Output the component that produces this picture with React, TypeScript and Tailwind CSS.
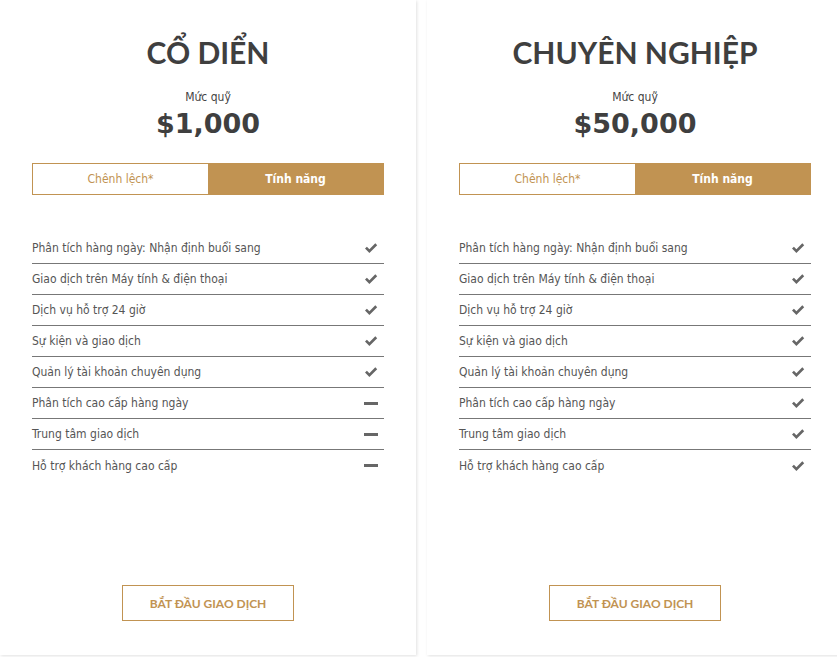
const features = [
  'Phân tích hàng ngày: Nhận định buổi sang',
  'Giao dịch trên Máy tính & điện thoại',
  'Dịch vụ hỗ trợ 24 giờ',
  'Sự kiện và giao dịch',
  'Quản lý tài khoản chuyên dụng',
  'Phân tích cao cấp hàng ngày',
  'Trung tâm giao dịch',
  'Hỗ trợ khách hàng cao cấp',
]

const plans = [
  { name: 'CỔ DIỂN', amount: '$1,000', included: 5 },
  { name: 'CHUYÊN NGHIỆP', amount: '$50,000', included: 8 },
]

const CheckIcon = () => (
  <svg width="14" height="12" viewBox="0 0 14 12" className="text-[#666]">
    <path d="M1 6.6 L2.9 4.7 L5.4 7.2 L11.3 1.3 L13.2 3.2 L5.4 11 Z" fill="currentColor" />
  </svg>
)

const MinusIcon = () => <div className="h-[3px] w-[14px] bg-[#666]" />

const PlanCard = ({ name, amount, included }: { name: string; amount: string; included: number }) => (
  <div className="flex h-[655px] w-[416px] shrink-0 flex-col bg-white px-8 pb-[34px] pt-[34px] shadow-[1px_1px_3px_rgba(0,0,0,0.12)]">
    <h2 className="text-center font-['Lato'] text-[30px] font-bold leading-[36px] text-[#3f3f3f]">{name}</h2>
    <p className="mt-[19px] text-center text-[12px] leading-4 text-[#444]">Mức quỹ</p>
    <p className="mt-[3px] text-center font-['DejaVu_Sans',sans-serif] text-[27px] font-bold leading-8 text-[#3f3f3f]">
      {amount}
    </p>

    {/* Tabs */}
    <div className="mt-[23px] flex h-8 border border-[#c19352]">
      <div className="flex flex-1 items-center justify-center bg-white text-[12px] text-[#c19352]">Chênh lệch*</div>
      <div className="flex flex-1 items-center justify-center bg-[#c19352] text-[12px] font-bold text-white">Tính năng</div>
    </div>

    {/* Features */}
    <ul className="mt-[38px]">
      {features.map((f, i) => (
        <li
          key={f}
          className={`flex h-[31px] items-center justify-between pr-[6px] text-[12px] text-[#555] ${
            i < features.length - 1 ? 'border-b border-[#777]' : ''
          }`}
        >
          <span>{f}</span>
          {i < included ? <CheckIcon /> : <MinusIcon />}
        </li>
      ))}
    </ul>

    <div className="mt-auto flex justify-center">
      <button className="h-[36px] w-[172px] border border-[#c19352] pt-[2px] font-['Lato'] text-[12px] font-bold text-[#c19352]">
        BẮT ĐẦU GIAO DỊCH
      </button>
    </div>
  </div>
)

export default function App() {
  return (
    <div className="flex h-[657px] w-[837px] gap-[11px] overflow-hidden bg-white font-['DejaVu_Sans_Condensed','DejaVu_Sans',sans-serif]">
      {plans.map((p) => (
        <PlanCard key={p.name} {...p} />
      ))}
    </div>
  )
}
